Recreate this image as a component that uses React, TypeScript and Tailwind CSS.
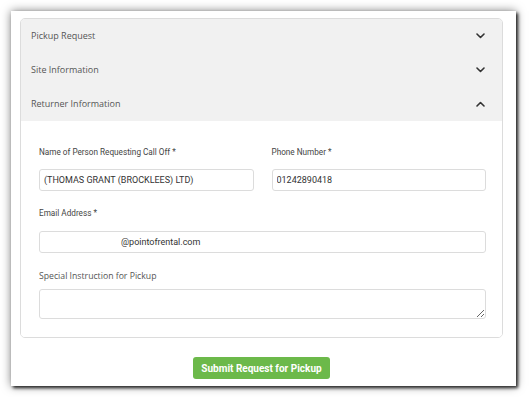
const HEAD = { fontFamily: '"Open Sans", "Liberation Sans", sans-serif' };
const ROBO = { fontFamily: 'Roboto, "Liberation Sans", sans-serif' };

function Chevron({ up }: { up?: boolean }) {
  return (
    <svg width="9" height="6" viewBox="0 0 9 6" className="text-[#333]">
      <path
        d={up ? 'M1 5 L4.5 1.5 L8 5' : 'M1 1 L4.5 4.5 L8 1'}
        fill="none"
        stroke="currentColor"
        strokeWidth={1.6}
        strokeLinecap="round"
        strokeLinejoin="round"
      />
    </svg>
  );
}

const SECTIONS = [
  { title: 'Pickup Request', open: false },
  { title: 'Site Information', open: false },
  { title: 'Returner Information', open: true },
];

export default function App() {
  return (
    <div className="w-[530px] h-[397px] bg-white pt-[11px] pl-[11px]">
      {/* 截图外框 */}
      <div className="w-[505px] h-[375px] bg-white flex flex-col shadow-[2px_2px_3px_rgba(0,0,0,0.8),0_0_9px_rgba(0,0,0,0.5)]">
        <div className="ml-[9px] mt-[7px] w-[483px] rounded-[5px] border border-[#dcdcdc] overflow-hidden">
          {SECTIONS.map((s) => (
            <div
              key={s.title}
              className="h-[34px] flex items-center justify-between pl-[10px] pr-[17px] bg-[#f1f1f1]"
            >
              <span style={HEAD} className="text-[9px] text-[#555]">{s.title}</span>
              <Chevron up={s.open} />
            </div>
          ))}

          {/* 展开内容 */}
          <div className="bg-white pt-[25px] pb-[18px] pl-[18px] pr-[16px]">
            <div className="grid grid-cols-2 gap-x-[18px]">
              <div className="flex flex-col">
                <label style={ROBO} className="text-[8.2px] leading-[12px] text-[#444] mb-[11px]">
                  Name of Person Requesting Call Off *
                </label>
                <input
                  readOnly
                  value="(THOMAS GRANT (BROCKLEES) LTD)"
                  style={ROBO}
                  className="block h-[22px] rounded-[3px] border border-[#dcdcdc] px-[4px] text-[9px] text-[#333] outline-none"
                />
              </div>
              <div className="flex flex-col">
                <label style={ROBO} className="text-[8.2px] leading-[12px] text-[#444] mb-[11px]">
                  Phone Number *
                </label>
                <input
                  readOnly
                  value="01242890418"
                  style={ROBO}
                  className="block h-[22px] rounded-[3px] border border-[#dcdcdc] px-[4px] text-[9px] text-[#333] outline-none"
                />
              </div>
            </div>

            <label style={ROBO} className="block mt-[16px] text-[8.2px] leading-[12px] text-[#444] mb-[12px]">
              Email Address *
            </label>
            <input
              readOnly
              value="@pointofrental.com"
              style={ROBO}
              className="block w-full h-[22px] rounded-[3px] border border-[#dcdcdc] px-[4px] indent-[77px] text-[9px] text-[#333] outline-none"
            />

            <label style={HEAD} className="block mt-[17px] text-[8.7px] leading-[12px] text-[#555] mb-[7px]">
              Special Instruction for Pickup
            </label>
            <textarea
              readOnly
              className="block w-full h-[30px] rounded-[3px] border border-[#dcdcdc] outline-none"
            />
          </div>
        </div>

        <div className="flex justify-center ml-[9px] w-[483px] mt-[19px]">
          <button
            style={ROBO}
            className="w-[137px] h-[22px] rounded-[3px] bg-[#6cb94a] text-white text-[10px] font-bold"
          >
            Submit Request for Pickup
          </button>
        </div>
      </div>
    </div>
  );
}
